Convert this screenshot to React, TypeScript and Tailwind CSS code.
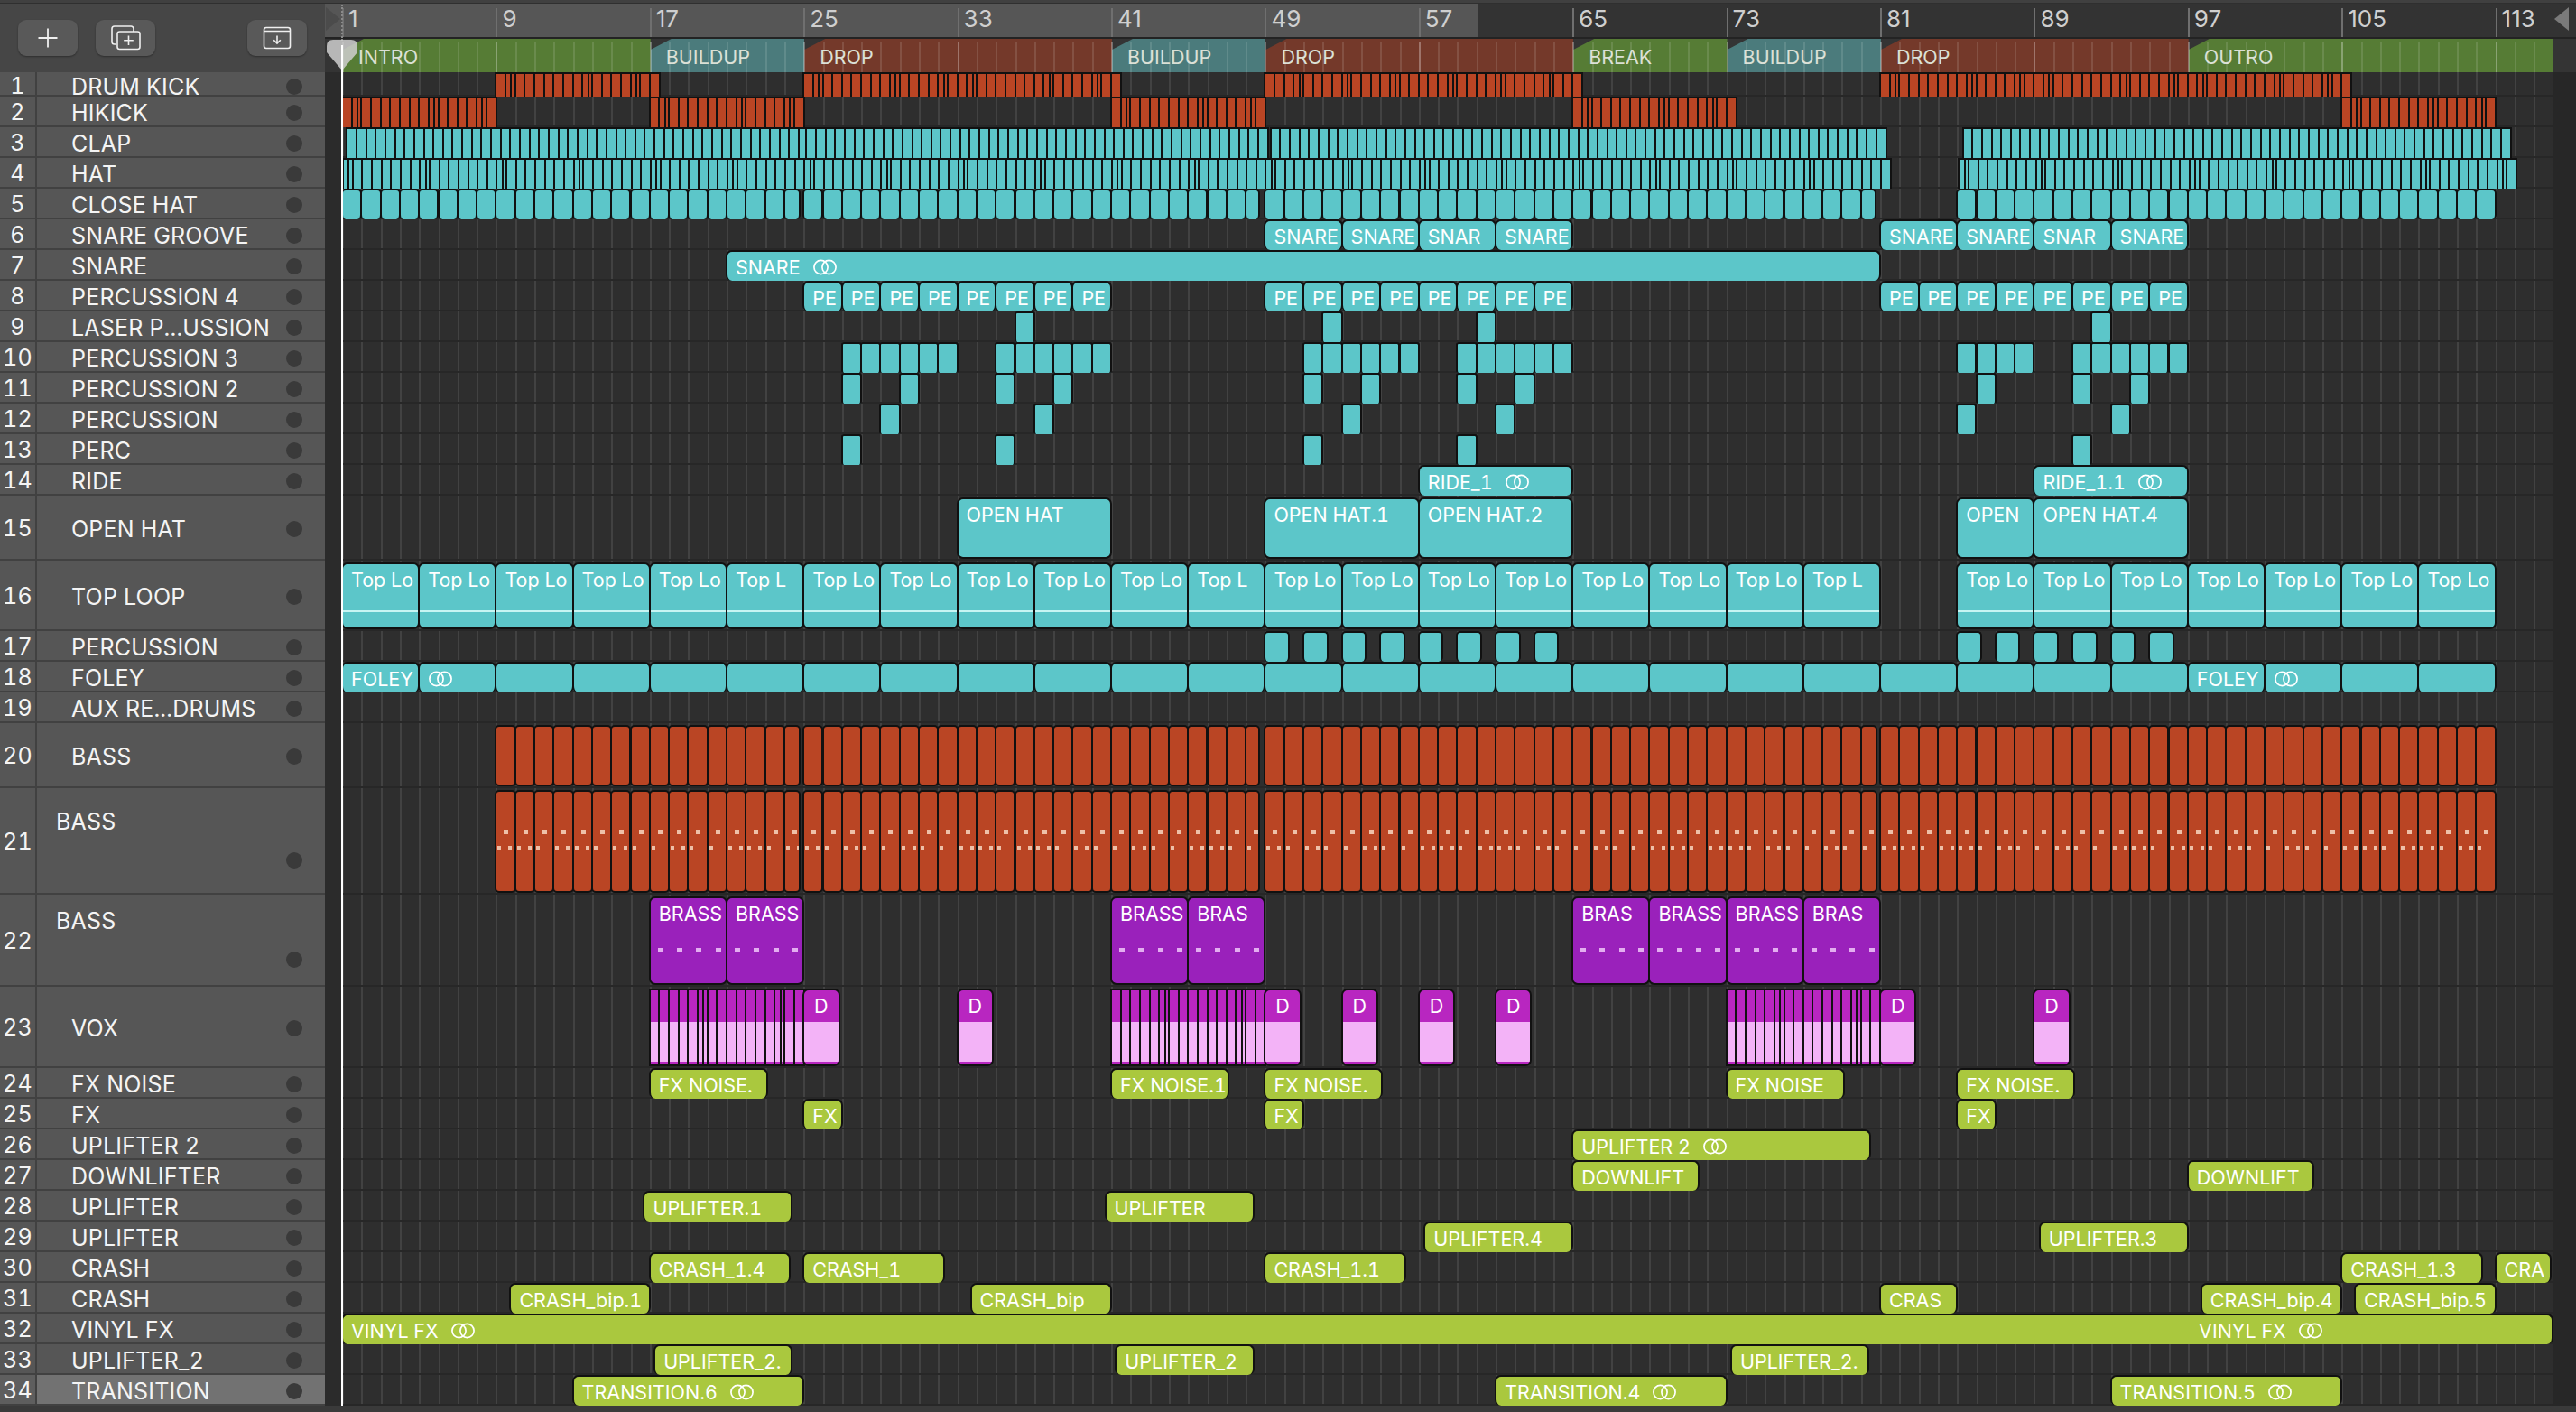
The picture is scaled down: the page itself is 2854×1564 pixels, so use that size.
import React from "react";

const BAR = 21.3;

type Kind = "plain" | "loop" | "bass" | "brass" | "vox";
type Clip = { s: number; e: number; label?: string; link?: boolean; round?: string; kind?: Kind };
type Track = {
  n: number;
  name: string;
  h: string;
  rowPx: number;
  color?: string;
  clips: Clip[];
  nameLayout?: string;
  selected?: boolean;
};

const TEAL = "bg-[#5cc6c9]";
const RED = "bg-[#ba4524]";
const PURPLE = "bg-[#9a21bb]";
const MAGENTA = "bg-[#b826c0]";
const LIME = "bg-[#aac83e]";

// half bar slices with the odd narrow hit thrown in
function chop(s: number, e: number, step = 0.5, narrow: number[] = []): Clip[] {
  const out: Clip[] = [];
  let i = 0;
  for (let x = s; x < e - 0.01; x += step, i++) {
    const end = Math.min(x + step, e);
    if (narrow.includes(i % 16) && end - x === step) {
      const mid = x + step * 0.6;
      out.push({ s: x, e: mid, round: "rounded-none" }, { s: mid, e: end, round: "rounded-none" });
    } else {
      out.push({ s: x, e: end, round: "rounded-none" });
    }
  }
  return out;
}

function bars(s: number, e: number, round: string, kind?: Kind): Clip[] {
  const out: Clip[] = [];
  for (let x = s; x < e - 0.01; x += 1) out.push({ s: x, e: Math.min(x + 1, e), round, kind });
  return out;
}

function blocks(starts: number[], len: number, label?: string, round?: string): Clip[] {
  return starts.map((s) => ({ s, e: s + len, label, round }));
}

const topLoop: Clip[] = [
  ...[1, 5, 9, 13, 17, 25, 29, 33, 37, 41, 49, 53, 57, 61, 65, 69, 73, 85, 89, 93, 97, 101, 105, 109].map((s) => ({
    s,
    e: s + 4,
    label: "Top Lo",
    kind: "loop" as Kind,
  })),
  ...[21, 45, 77].map((s) => ({ s, e: s + 4, label: "Top L", kind: "loop" as Kind })),
].sort((a, b) => a.s - b.s);

const foley: Clip[] = [];
for (let s = 1; s < 113; s += 4) {
  if (s === 1 || s === 97) foley.push({ s, e: s + 4, label: "FOLEY" });
  else if (s === 5 || s === 101) foley.push({ s, e: s + 4, link: true });
  else foley.push({ s, e: s + 4 });
}

const bassRuns = (kind?: Kind) => [
  ...bars(9, 24.8, "rounded-[5px]", kind),
  ...bars(25, 48.7, "rounded-[5px]", kind),
  ...bars(49, 80.8, "rounded-[5px]", kind),
  ...bars(81, 113, "rounded-[5px]", kind),
];

const small = "rounded-[3px]";
const voxRun = (s: number) => chop(s, s + 8, 0.5, [5, 13]).map((c) => ({ ...c, kind: "vox" as Kind }));
const voxD = (s: number): Clip => ({ s, e: s + 1.85, label: "D", kind: "vox" });

const tracks: Track[] = [
  {
    n: 1, name: "DRUM KICK", h: "h-[27px]", rowPx: 27, color: RED,
    clips: [...chop(9, 17.2, 0.5, [1, 9, 14]), ...chop(25, 41.25, 0.5, [1, 9, 14]), ...chop(49, 65.3, 0.5, [3, 8, 13]), ...chop(81, 105.3, 0.5, [1, 9, 14])],
  },
  {
    n: 2, name: "HIKICK", h: "h-[34px]", rowPx: 34, color: RED,
    clips: [...chop(1, 9, 0.5, [1, 9, 14]), ...chop(17, 25, 0.5, [1, 9, 14]), ...chop(41, 49, 0.5, [1, 9, 14]), ...chop(65, 73.5, 0.5, [1, 9, 14]), ...chop(105, 113, 0.5, [1, 9, 14])],
  },
  {
    n: 3, name: "CLAP", h: "h-[34px]", rowPx: 34, color: TEAL,
    clips: [...chop(1.25, 25, 0.5), ...chop(25.15, 48.9, 0.5), ...chop(49.3, 81, 0.5), ...chop(85.3, 113.6, 0.5)],
  },
  {
    n: 4, name: "HAT", h: "h-[34px]", rowPx: 34, color: TEAL,
    clips: [...chop(1.05, 81.2, 0.5, [0, 8]), ...chop(85.1, 113.7, 0.5, [0, 8])],
  },
  {
    n: 5, name: "CLOSE HAT", h: "h-[34px]", rowPx: 34, color: TEAL,
    clips: [...bars(1, 24.8, "rounded-[5px]"), ...bars(25, 48.7, "rounded-[5px]"), ...bars(49, 80.75, "rounded-[5px]"), ...bars(85, 113, "rounded-[5px]")],
  },
  {
    n: 6, name: "SNARE GROOVE", h: "h-[34px]", rowPx: 34, color: TEAL,
    clips: [
      { s: 49, e: 53, label: "SNARE" }, { s: 53, e: 57, label: "SNARE" }, { s: 57, e: 61, label: "SNAR" }, { s: 61, e: 65, label: "SNARE" },
      { s: 81, e: 85, label: "SNARE" }, { s: 85, e: 89, label: "SNARE" }, { s: 89, e: 93, label: "SNAR" }, { s: 93, e: 97, label: "SNARE" },
    ],
  },
  { n: 7, name: "SNARE", h: "h-[34px]", rowPx: 34, color: TEAL, clips: [{ s: 21, e: 81, label: "SNARE", link: true }] },
  {
    n: 8, name: "PERCUSSION 4", h: "h-[34px]", rowPx: 34, color: TEAL,
    clips: blocks([25, 27, 29, 31, 33, 35, 37, 39, 49, 51, 53, 55, 57, 59, 61, 63, 81, 83, 85, 87, 89, 91, 93, 95], 2, "PE"),
  },
  { n: 9, name: "LASER P...USSION", h: "h-[34px]", rowPx: 34, color: TEAL, clips: blocks([36, 52, 60, 92], 1, undefined, small) },
  {
    n: 10, name: "PERCUSSION 3", h: "h-[34px]", rowPx: 34, color: TEAL,
    clips: [...bars(27, 33, small), ...bars(35, 41, small), ...bars(51, 57, small), ...bars(59, 65, small), ...bars(85, 89, small), ...bars(91, 97, small)],
  },
  { n: 11, name: "PERCUSSION 2", h: "h-[34px]", rowPx: 34, color: TEAL, clips: blocks([27, 30, 35, 38, 51, 54, 59, 62, 86, 91, 94], 1, undefined, small) },
  { n: 12, name: "PERCUSSION", h: "h-[34px]", rowPx: 34, color: TEAL, clips: blocks([29, 37, 53, 61, 85, 93], 1, undefined, small) },
  { n: 13, name: "PERC", h: "h-[34px]", rowPx: 34, color: TEAL, clips: blocks([27, 35, 51, 59, 91], 1, undefined, small) },
  {
    n: 14, name: "RIDE", h: "h-[34px]", rowPx: 34, color: TEAL,
    clips: [{ s: 57, e: 65, label: "RIDE_1", link: true }, { s: 89, e: 97, label: "RIDE_1.1", link: true }],
  },
  {
    n: 15, name: "OPEN HAT", h: "h-[72px]", rowPx: 72, color: TEAL,
    clips: [
      { s: 33, e: 41, label: "OPEN HAT" }, { s: 49, e: 57, label: "OPEN HAT.1" }, { s: 57, e: 65, label: "OPEN HAT.2" },
      { s: 85, e: 89, label: "OPEN" }, { s: 89, e: 97, label: "OPEN HAT.4" },
    ],
  },
  { n: 16, name: "TOP LOOP", h: "h-[78px]", rowPx: 78, color: TEAL, clips: topLoop },
  {
    n: 17, name: "PERCUSSION", h: "h-[34px]", rowPx: 34, color: TEAL,
    clips: blocks([49, 51, 53, 55, 57, 59, 61, 63, 85, 87, 89, 91, 93, 95], 1.25, undefined, "rounded-[5px]"),
  },
  { n: 18, name: "FOLEY", h: "h-[34px]", rowPx: 34, color: TEAL, clips: foley },
  { n: 19, name: "AUX RE...DRUMS", h: "h-[34px]", rowPx: 34, clips: [] },
  { n: 20, name: "BASS", h: "h-[72px]", rowPx: 72, color: RED, clips: bassRuns() },
  { n: 21, name: "BASS", h: "h-[118px]", rowPx: 118, color: RED, clips: bassRuns("bass"), nameLayout: "pt-[23px] pb-[27px]" },
  {
    n: 22, name: "BASS", h: "h-[102px]", rowPx: 102, color: PURPLE,
    nameLayout: "pt-[15px] pb-[19px]",
    clips: ([
      [17, "BRASS"], [21, "BRASS"], [41, "BRASS"], [45, "BRAS"], [65, "BRAS"], [69, "BRASS"], [73, "BRASS"], [77, "BRAS"],
    ] as [number, string][]).map(([s, label]) => ({ s, e: s + 4, label, kind: "brass" as Kind })),
  },
  {
    n: 23, name: "VOX", h: "h-[90px]", rowPx: 90, color: MAGENTA,
    clips: [...voxRun(17), voxD(25), voxD(33), ...voxRun(41), voxD(49), voxD(53), voxD(57), voxD(61), ...voxRun(73), voxD(81), voxD(89)],
  },
  {
    n: 24, name: "FX NOISE", h: "h-[34px]", rowPx: 34, color: LIME,
    clips: [
      { s: 17, e: 23.1, label: "FX NOISE." }, { s: 41, e: 47.1, label: "FX NOISE.1" }, { s: 49, e: 55.1, label: "FX NOISE." },
      { s: 73, e: 79.1, label: "FX NOISE" }, { s: 85, e: 91.1, label: "FX NOISE." },
    ],
  },
  { n: 25, name: "FX", h: "h-[34px]", rowPx: 34, color: LIME, clips: blocks([25, 49, 85], 2, "FX") },
  { n: 26, name: "UPLIFTER 2", h: "h-[34px]", rowPx: 34, color: LIME, clips: [{ s: 65, e: 80.5, label: "UPLIFTER 2", link: true }] },
  { n: 27, name: "DOWNLIFTER", h: "h-[34px]", rowPx: 34, color: LIME, clips: blocks([65, 97], 6.55, "DOWNLIFT") },
  {
    n: 28, name: "UPLIFTER", h: "h-[34px]", rowPx: 34, color: LIME,
    clips: [{ s: 16.7, e: 24.4, label: "UPLIFTER.1" }, { s: 40.7, e: 48.4, label: "UPLIFTER" }],
  },
  {
    n: 29, name: "UPLIFTER", h: "h-[34px]", rowPx: 34, color: LIME,
    clips: [{ s: 57.3, e: 65, label: "UPLIFTER.4" }, { s: 89.3, e: 97, label: "UPLIFTER.3" }],
  },
  {
    n: 30, name: "CRASH", h: "h-[34px]", rowPx: 34, color: LIME,
    clips: [
      { s: 17, e: 24.3, label: "CRASH_1.4" }, { s: 25, e: 32.3, label: "CRASH_1" }, { s: 49, e: 56.3, label: "CRASH_1.1" },
      { s: 105, e: 112.3, label: "CRASH_1.3" }, { s: 113, e: 115.9, label: "CRA" },
    ],
  },
  {
    n: 31, name: "CRASH", h: "h-[34px]", rowPx: 34, color: LIME,
    clips: [
      { s: 9.75, e: 17, label: "CRASH_bip.1" }, { s: 33.7, e: 41, label: "CRASH_bip" }, { s: 81, e: 85, label: "CRAS" },
      { s: 97.7, e: 105, label: "CRASH_bip.4" }, { s: 105.7, e: 113, label: "CRASH_bip.5" },
    ],
  },
  {
    n: 32, name: "VINYL FX", h: "h-[34px]", rowPx: 34, color: LIME,
    clips: [{ s: 1, e: 97.2, label: "VINYL FX", link: true, round: "rounded-l-[7px] rounded-r-none border-r-0" }, { s: 97.2, e: 116, label: "VINYL FX", link: true, round: "rounded-r-[7px] rounded-l-none border-l-0" }],
  },
  {
    n: 33, name: "UPLIFTER_2", h: "h-[34px]", rowPx: 34, color: LIME,
    clips: [{ s: 17.25, e: 24.4, label: "UPLIFTER_2." }, { s: 41.25, e: 48.4, label: "UPLIFTER_2" }, { s: 73.25, e: 80.4, label: "UPLIFTER_2." }],
  },
  {
    n: 34, name: "TRANSITION", h: "h-[34px]", rowPx: 34, color: LIME, selected: true,
    clips: [
      { s: 13, e: 25, label: "TRANSITION.6", link: true }, { s: 61, e: 73, label: "TRANSITION.4", link: true }, { s: 93, e: 105, label: "TRANSITION.5", link: true },
    ],
  },
];

const markers = [
  { s: 1, e: 17, label: "INTRO", bg: "bg-[#567c35]" },
  { s: 17, e: 25, label: "BUILDUP", bg: "bg-[#4b7b7c]" },
  { s: 25, e: 41, label: "DROP", bg: "bg-[#74392a]" },
  { s: 41, e: 49, label: "BUILDUP", bg: "bg-[#4b7b7c]" },
  { s: 49, e: 65, label: "DROP", bg: "bg-[#74392a]" },
  { s: 65, e: 73, label: "BREAK", bg: "bg-[#567c35]" },
  { s: 73, e: 81, label: "BUILDUP", bg: "bg-[#4b7b7c]" },
  { s: 81, e: 97, label: "DROP", bg: "bg-[#74392a]" },
  { s: 97, e: 116, label: "OUTRO", bg: "bg-[#567c35]" },
];

const barList = Array.from({ length: 115 }, (_, i) => i + 1);
const rulerBars = barList.filter((b) => (b - 1) % 8 === 0);

// grid starts a pixel under the playhead
const xOf = (bar: number) => (bar - 1) * BAR - 1;

const bassTicks = [0, 1, 3, 4, 6, 9];

function LinkIcon() {
  return (
    <svg width="28" height="18" viewBox="0 0 28 18" fill="none" stroke="currentColor" strokeWidth="1.7" className="shrink-0">
      <circle cx="9.5" cy="9" r="7.6" />
      <circle cx="18.5" cy="9" r="7.6" />
    </svg>
  );
}

function ClipBox({ clip, color, tall, index }: { clip: Clip; color?: string; tall: boolean; index: number }) {
  const kind = clip.kind ?? "plain";
  return (
    <div
      className={`absolute flex overflow-hidden border-2 border-[#111] whitespace-nowrap text-[21.5px] leading-[26px] text-white ${color} ${
        clip.round ?? "rounded-[7px]"
      } ${tall ? "top-[2px] bottom-[2px] items-start pt-[4px]" : "top-0 bottom-0 items-center border-b-0 pt-[2px]"} ${
        clip.label === "D" ? "justify-center" : "pl-[9px]"
      }`}
      style={{ left: xOf(clip.s) - 1, width: (clip.e - clip.s) * BAR + 2 }}
    >
      {clip.label && <span className="relative z-10">{clip.label}</span>}
      {clip.link && (
        <span className={`relative z-10 ${clip.label ? "ml-[13px]" : ""}`}>
          <LinkIcon />
        </span>
      )}
      {kind === "loop" && <div className="absolute top-[51px] right-0 left-0 h-[2px] bg-[#c7f5f3]" />}
      {kind === "bass" && (
        <>
          <div className="absolute top-[42px] left-[8px] h-[5px] w-[5px] bg-[#eec0a8]" />
          <div className="absolute top-[60px] left-[1px] h-[5px] w-[4px] bg-[#eec0a8]" />
          {bassTicks.includes(index % 12) && <div className="absolute top-[60px] left-[13px] h-[5px] w-[4px] bg-[#eec0a8]" />}
        </>
      )}
      {kind === "brass" &&
        [0, 1, 2, 3].map((d) => (
          <div key={d} className="absolute top-[55px] h-[5px] w-[6px] bg-[#e3aef0]" style={{ left: 8 + d * BAR }} />
        ))}
      {kind === "vox" && <div className="absolute top-[35px] right-0 bottom-[3px] left-0 bg-[#f3b3f7]" />}
    </div>
  );
}

function TrackHeader({ track }: { track: Track }) {
  const dot = <div className="h-[18px] w-[18px] shrink-0 rounded-full bg-[#3a3a3a]" />;
  const shift = track.n === 1 ? "pt-[7px]" : "pt-[4px]";
  return (
    <div className={`flex w-full border-b-2 border-[#414141] ${track.h} ${track.selected ? "bg-[#727272]" : "bg-[#565656]"}`}>
      <div className={`flex w-[41px] shrink-0 items-center justify-center border-r-2 border-[#414141] ${shift} ${track.selected ? "bg-[#5e5e5e]" : ""}`}>
        {track.n}
      </div>
      {track.nameLayout ? (
        <div className={`flex flex-1 flex-col justify-between pr-[25px] pl-[21px] ${track.nameLayout}`}>
          <span className="leading-[28px]">{track.name}</span>
          <div className="self-end">{dot}</div>
        </div>
      ) : (
        <div className={`flex flex-1 items-center pr-[25px] pl-[38px] ${shift}`}>
          <span className="leading-[28px] whitespace-nowrap">{track.name}</span>
          <div className="ml-auto">{dot}</div>
        </div>
      )}
    </div>
  );
}

function HeaderButton({ children, className = "" }: { children: React.ReactNode; className?: string }) {
  return (
    <button className={`flex h-[40px] w-[66px] items-center justify-center rounded-[9px] bg-[#595959] shadow-[0_1px_2px_rgba(0,0,0,0.35)] ${className}`}>
      {children}
    </button>
  );
}

export default function App() {
  return (
    <div className="relative flex h-[1564px] w-[2854px] flex-col overflow-hidden bg-[#3a3a3a] font-[Inter,sans-serif] text-[#f4f4f4] tabular-nums">
      <div className="h-[4px] shrink-0 border-b border-[#2f2f2f] bg-[#404040]" />

      <div className="flex h-[1553px] shrink-0">
        {/* track list */}
        <aside className="flex w-[360px] shrink-0 flex-col text-[25px] tracking-[0.2px]">
          <div className="flex h-[76px] shrink-0 gap-[20px] bg-[#464646] px-[20px] pt-[18px]">
            <HeaderButton>
              <svg width="24" height="24" viewBox="0 0 24 24" fill="none" stroke="#efefef" strokeWidth="1.8">
                <path d="M12 1.5v21M1.5 12h21" />
              </svg>
            </HeaderButton>
            <HeaderButton>
              <svg width="34" height="28" viewBox="0 0 34 28" fill="none" stroke="#efefef" strokeWidth="1.6" className="translate-x-[1px]">
                <path d="M5 21H3.8A2.8 2.8 0 0 1 1 18.2V3.8A2.8 2.8 0 0 1 3.8 1h18.4A2.8 2.8 0 0 1 25 3.8V7" />
                <rect x="7" y="7" width="25" height="19.5" rx="2.5" />
                <path d="M19.5 11.5v10.5M14.2 16.8h10.6" />
              </svg>
            </HeaderButton>
            <HeaderButton className="ml-auto">
              <svg width="32" height="26" viewBox="0 0 32 26" fill="none" stroke="#efefef" strokeWidth="1.6">
                <rect x="1.5" y="1.5" width="29" height="23" rx="2.5" />
                <path d="M1.5 5.5h29M16 10.5v8M12.2 15.2 16 19l3.8-3.8" />
              </svg>
            </HeaderButton>
          </div>
          {tracks.map((t) => (
            <TrackHeader key={t.n} track={t} />
          ))}
        </aside>

        {/* arrangement */}
        <section className="flex min-w-0 flex-1 flex-col">
          <div className="relative h-[39px] shrink-0 border-b-2 border-[#232323] bg-[#333333] text-[26px] text-[#cfcfcf] normal-nums">
            <div className="absolute inset-y-0 left-0 w-[1278px] bg-[#565656]" />
            {rulerBars.map((b) => (
              <React.Fragment key={b}>
                <div className="absolute top-[5px] bottom-0 w-[2px] bg-[#6f6f6f]" style={{ left: 20 + xOf(b) }} />
                <span className="absolute top-[2px] leading-[30px]" style={{ left: 20 + xOf(b) + 7 }}>
                  {b}
                </span>
              </React.Fragment>
            ))}
          </div>

          <div className="relative h-[37px] shrink-0 overflow-hidden bg-[#343434] text-[21.5px] text-[#dbe0d6]">
            {markers.map((m) => (
              <div
                key={m.s}
                className={`absolute inset-y-0 flex items-center pt-[2px] pl-[17px] [clip-path:polygon(23px_0,100%_0,100%_100%,0_100%,0_12px)] ${m.bg}`}
                style={{ left: 20 + xOf(m.s) + 1, width: (m.e - m.s) * BAR }}
              >
                <span className="leading-[26px]">{m.label}</span>
              </div>
            ))}
            {barList.map((b) => (
              <div
                key={b}
                className={`absolute top-[3px] bottom-0 w-[2px] ${(b - 1) % 8 === 0 ? "bg-white/30" : "bg-white/12"}`}
                style={{ left: 20 + xOf(b) }}
              />
            ))}
          </div>

          <div className="flex min-h-0 flex-1">
            <div className="w-[20px] shrink-0 bg-[#2b2b2b]" />
            <div className="relative flex w-[2448px] shrink-0 flex-col overflow-hidden bg-[#2e2e2e]">
              {barList.map((b) => (
                <div key={b} className="absolute inset-y-0 w-[2px] bg-[#424242]" style={{ left: xOf(b) }} />
              ))}
              {tracks.map((t) => (
                <div key={t.n} className={`relative w-full shrink-0 ${t.h}`}>
                  <div className="absolute inset-x-0 bottom-0 h-[2px] bg-[#272727]" />
                  {t.clips.map((c, i) => (
                    <ClipBox key={i} clip={c} color={t.color} tall={t.rowPx > 34} index={i} />
                  ))}
                </div>
              ))}
            </div>
            <div className="flex-1 bg-[#272727]" />
          </div>
        </section>
      </div>

      {/* locators and playhead sit over everything */}
      <svg width="18" height="26" viewBox="0 0 18 26" className="absolute top-[8px] left-[361px]">
        <path d="M0 0 16 13 0 26Z" fill="#4b4b4b" />
      </svg>
      <svg width="18" height="26" viewBox="0 0 18 26" className="absolute top-[8px] left-[2829px]">
        <path d="M17 0 1 13 17 26Z" fill="#7a7a7a" />
      </svg>
      <div className="absolute top-[5px] left-[378px] h-[40px] w-[2px] border-l-2 border-dotted border-[#8a8a8a]" />
      <svg width="36" height="36" viewBox="0 0 36 36" className="absolute top-[43px] left-[361px]">
        <path d="M1 8Q1 1 8 1H28Q35 1 35 8V15L18 35 1 15Z" fill="#cfcfcf" fillOpacity="0.85" />
      </svg>
      <div className="absolute top-[50px] left-[378px] h-[1507px] w-[2px] bg-white" />
    </div>
  );
}
